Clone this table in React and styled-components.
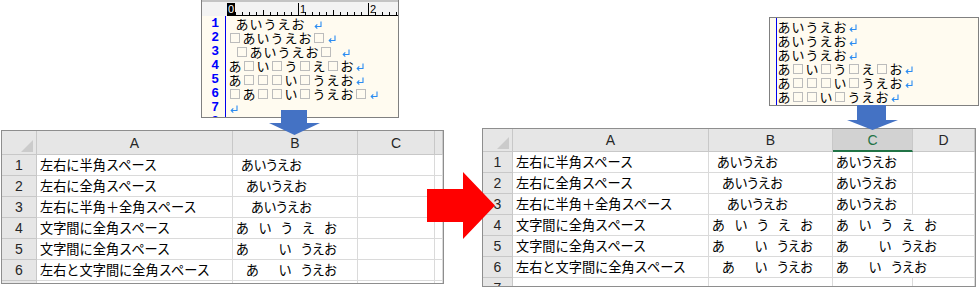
import React from 'react'
import styled, { createGlobalStyle } from 'styled-components'

const GlobalStyle = createGlobalStyle`
  html, body { margin: 0; padding: 0; background: #fff; }
  body { font-family: "Noto Sans CJK JP", "Liberation Sans", sans-serif; }
`

const Page = styled.div`
  position: relative;
  width: 979px;
  height: 287px;
  overflow: hidden;
  display: flex;
`

const Side = styled.div`
  display: flex;
  flex-direction: column;
  margin-left: ${({ $left }) => $left}px;
`

/* ---------- text editor ---------- */

const Editor = styled.div`
  box-sizing: border-box;
  margin-left: ${({ $left }) => $left}px;
  margin-top: ${({ $top }) => $top || 0}px;
  width: ${({ $w }) => $w}px;
  height: ${({ $h }) => $h}px;
  border: 1px solid #808080;
  border-top: ${({ $ruler }) => ($ruler ? 'none' : '1px solid #808080')};
  background: #fffbf0;
  display: flex;
  flex-direction: column;
  overflow: hidden;
  flex-shrink: 0;
`

const Ruler = styled.div`
  height: 16px;
  flex-shrink: 0;
  background: #f3f3f3;
  display: flex;
`

const Body = styled.div`
  flex: 1;
  display: flex;
  min-height: 0;
  padding-top: ${({ $pad }) => $pad}px;
`

const Gutter = styled.div`
  box-sizing: border-box;
  width: ${({ $w }) => $w}px;
  margin-top: -${({ $pad }) => $pad}px;
  padding-top: ${({ $pad }) => $pad}px;
  border-right: 1px solid #0000ee;
  flex-shrink: 0;
`

const LineNo = styled.div`
  height: 14px;
  line-height: 14px;
  text-align: right;
  padding-right: 6px;
  font-family: "Liberation Mono", monospace;
  font-weight: bold;
  font-size: 13px;
  color: #0000ff;
`

const TextCol = styled.div`
  padding-left: ${({ $pad }) => $pad}px;
`

const Line = styled.div`
  height: 14px;
  display: flex;
  align-items: center;
  font-family: "Noto Sans CJK JP", sans-serif;
  font-size: 13px;
  line-height: 14px;
  color: #000;
`

const Glyph = styled.span`
  display: inline-flex;
  justify-content: center;
  align-items: center;
  width: ${({ $half }) => ($half ? 7 : 14)}px;
  height: 14px;
  flex-shrink: 0;
`

const ZenBox = styled.span`
  box-sizing: border-box;
  width: 10px;
  height: 10px;
  border: 1px solid #bcbcbc;
`

const RetSvg = styled.svg`
  margin-left: 1px;
  flex-shrink: 0;
`

const RetMark = () => (
  <RetSvg width="10" height="14" viewBox="0 0 10 14">
    <path d="M8 4.5 V9.5 H2.2 M4.3 7.4 L2.2 9.5 L4.3 11.6" stroke="#2b8cf2" strokeWidth="1.1" fill="none" />
  </RetSvg>
)

const EditLine = ({ text }) => (
  <Line>
    {[...text].map((ch, i) =>
      ch === ' ' ? (
        <Glyph key={i} $half />
      ) : ch === '\u3000' ? (
        <Glyph key={i}>
          <ZenBox />
        </Glyph>
      ) : (
        <Glyph key={i}>{ch}</Glyph>
      )
    )}
    <RetMark />
  </Line>
)

const RulerDrawing = () => {
  const ticks = []
  for (let i = 1; i <= 24; i++) {
    const x = 26.5 + 7 * i
    const top = i % 10 === 0 ? 3 : i % 5 === 0 ? 10 : 12
    ticks.push(<line key={i} x1={x} x2={x} y1={top} y2={15} stroke="#000" strokeWidth="1" />)
  }
  return (
    <svg width="196" height="16" viewBox="0 0 196 16">
      <rect x="0" y="0" width="196" height="2" fill="#c4c4c4" />
      <line x1="26" x2="196" y1="15.5" y2="15.5" stroke="#000" strokeWidth="1" />
      {ticks}
      <rect x="25" y="3" width="8" height="13" fill="#000" />
      <text x="26" y="13" fontFamily="Liberation Sans, sans-serif" fontSize="11" fill="#fff">0</text>
      <text x="98" y="13" fontFamily="Liberation Sans, sans-serif" fontSize="11" fill="#000">1</text>
      <text x="168" y="13" fontFamily="Liberation Sans, sans-serif" fontSize="11" fill="#000">2</text>
    </svg>
  )
}

/* ---------- spreadsheet ---------- */

const Sheet = styled.div`
  box-sizing: border-box;
  margin-left: ${({ $left }) => $left || 0}px;
  margin-top: ${({ $top }) => $top}px;
  width: ${({ $w }) => $w}px;
  height: ${({ $h }) => $h}px;
  border: 1px solid #8e8e8e;
  background: #fff;
  display: grid;
  grid-template-columns: ${({ $cols }) => $cols};
  grid-template-rows: ${({ $hdr }) => $hdr}px repeat(6, 21px) 1fr;
  overflow: hidden;
  flex-shrink: 0;
`

const HeadCell = styled.div`
  box-sizing: border-box;
  background: ${({ $sel }) => ($sel ? '#d2d2d2' : '#e6e6e6')};
  border-right: 1px solid #c8c8c8;
  border-bottom: ${({ $sel }) => ($sel ? '2px solid #217346' : '1px solid #c8c8c8')};
  display: flex;
  align-items: center;
  justify-content: center;
  font-family: "Liberation Sans", Arial, sans-serif;
  font-size: 14px;
  color: ${({ $sel }) => ($sel ? '#217346' : '#262626')};
`

const Corner = styled(HeadCell)`
  justify-content: flex-end;
  align-items: flex-end;
  padding: 0 3px 2px 0;
`

const Tri = styled.div`
  width: 0;
  height: 0;
  border-left: 12px solid transparent;
  border-bottom: 12px solid #cbcbcb;
`

const RowHead = styled.div`
  box-sizing: border-box;
  background: #e6e6e6;
  border-right: 1px solid #c8c8c8;
  border-bottom: 1px solid #c8c8c8;
  text-align: center;
  line-height: 20px;
  font-family: "Liberation Sans", Arial, sans-serif;
  font-size: 14px;
  color: #262626;
  span {
    position: relative;
    z-index: 2;
  }
`

const Cell = styled.div`
  box-sizing: border-box;
  grid-column: span ${({ $span }) => $span || 1};
  border-right: 1px solid #dadada;
  border-bottom: 1px solid #dadada;
  padding: 0 3px;
  display: flex;
  align-items: center;
  white-space: nowrap;
  font-family: "Noto Sans CJK JP", sans-serif;
  font-size: 13.2px;
  line-height: 20px;
  color: #000;
  font-feature-settings: ${({ $kana }) => ($kana ? '"palt"' : 'normal')};
`

const Gap = styled.span`
  display: inline-block;
  width: ${({ $w }) => $w}px;
  flex-shrink: 0;
`

const Spaced = ({ text }) =>
  [...text].map((ch, i) =>
    ch === ' ' ? <Gap key={i} $w={5} /> : ch === '\u3000' ? <Gap key={i} $w={10} /> : <span key={i}>{ch}</span>
  )

const rows = [
  ['左右に半角スペース', ' あいうえお ', 'あいうえお'],
  ['左右に全角スペース', '\u3000あいうえお\u3000', 'あいうえお'],
  ['左右に半角＋全角スペース', ' \u3000あいうえお\u3000 ', 'あいうえお'],
  ['文字間に全角スペース', 'あ\u3000い\u3000う\u3000え\u3000お', 'あ\u3000い\u3000う\u3000え\u3000お'],
  ['文字間に全角スペース', 'あ\u3000\u3000\u3000い\u3000うえお', 'あ\u3000\u3000\u3000い\u3000うえお'],
  ['左右と文字間に全角スペース', '\u3000あ\u3000\u3000い\u3000うえお\u3000', 'あ\u3000\u3000い\u3000うえお'],
]

const SpreadSheet = ({ filled, ...layout }) => (
  <Sheet {...layout}>
    <Corner>
      <Tri />
    </Corner>
    <HeadCell>A</HeadCell>
    <HeadCell>B</HeadCell>
    <HeadCell $sel={filled}>C</HeadCell>
    <HeadCell>{filled ? 'D' : ''}</HeadCell>
    {rows.map(([a, b, c], i) => (
      <React.Fragment key={i}>
        <RowHead>
          <span>{i + 1}</span>
        </RowHead>
        <Cell>{a}</Cell>
        <Cell $kana>
          <Spaced text={b} />
        </Cell>
        {filled && i >= 3 ? (
          <Cell $kana $span={2}>
            <Spaced text={c} />
          </Cell>
        ) : (
          <>
            <Cell $kana>{filled ? <Spaced text={c} /> : null}</Cell>
            <Cell />
          </>
        )}
      </React.Fragment>
    ))}
    <RowHead>
      <span>7</span>
    </RowHead>
    <Cell />
    <Cell />
    <Cell />
    <Cell />
  </Sheet>
)

/* ---------- arrows ---------- */

const Arrow = styled.svg`
  position: absolute;
  left: ${({ $x }) => $x}px;
  top: ${({ $y }) => $y}px;
  z-index: 1;
`

const leftLines = [
  ' あいうえお ',
  '\u3000あいうえお\u3000',
  ' \u3000あいうえお\u3000 ',
  'あ\u3000い\u3000う\u3000え\u3000お',
  'あ\u3000\u3000\u3000い\u3000うえお',
  '\u3000あ\u3000\u3000い\u3000うえお\u3000',
  '',
]

const rightLines = [
  'あいうえお',
  'あいうえお',
  'あいうえお',
  'あ\u3000い\u3000う\u3000え\u3000お',
  'あ\u3000\u3000\u3000い\u3000うえお',
  'あ\u3000\u3000い\u3000うえお',
]

export default function App() {
  return (
    <>
      <GlobalStyle />
      <Page>
        <Side $left={1}>
          <Editor $left={200} $w={198} $h={118} $ruler>
            <Ruler>
              <RulerDrawing />
            </Ruler>
            <Body $pad={1}>
              <Gutter $w={24} $pad={1}>
                {[1, 2, 3, 4, 5, 6, 7, 8].map((n) => (
                  <LineNo key={n}>{n}</LineNo>
                ))}
              </Gutter>
              <TextCol $pad={2}>
                {leftLines.map((t, i) => (
                  <EditLine key={i} text={t} />
                ))}
              </TextCol>
            </Body>
          </Editor>
          <SpreadSheet $top={12} $w={443} $h={154} $hdr={24} $cols="35px 196px 125px 77px 1fr" />
        </Side>

        <Side $left={38}>
          <Editor $left={287} $top={17} $w={210} $h={89}>
            <Body $pad={2}>
              <Gutter $w={7} $pad={2} />
              <TextCol $pad={0}>
                {rightLines.map((t, i) => (
                  <EditLine key={i} text={t} />
                ))}
              </TextCol>
            </Body>
          </Editor>
          <SpreadSheet filled $top={22} $w={494} $h={159} $hdr={23} $cols="30px 196px 124px 80px 1fr" />
        </Side>

        <Arrow $x={269} $y={110} width="52" height="26" viewBox="0 0 52 26">
          <polygon points="12,0 38,0 38,13 51,13 25.5,25 0,13 12,13" fill="#4472c4" />
        </Arrow>
        <Arrow $x={847} $y={105} width="52" height="26" viewBox="0 0 52 26">
          <polygon points="10,0 39,0 39,15 51,15 25.5,25 0,15 10,15" fill="#4472c4" />
        </Arrow>
        <Arrow $x={427} $y={172} width="69" height="68" viewBox="0 0 69 68">
          <polygon points="0,17 36,17 36,0 68,33.5 36,67 36,50 0,50" fill="#ff0000" />
        </Arrow>
      </Page>
    </>
  )
}
